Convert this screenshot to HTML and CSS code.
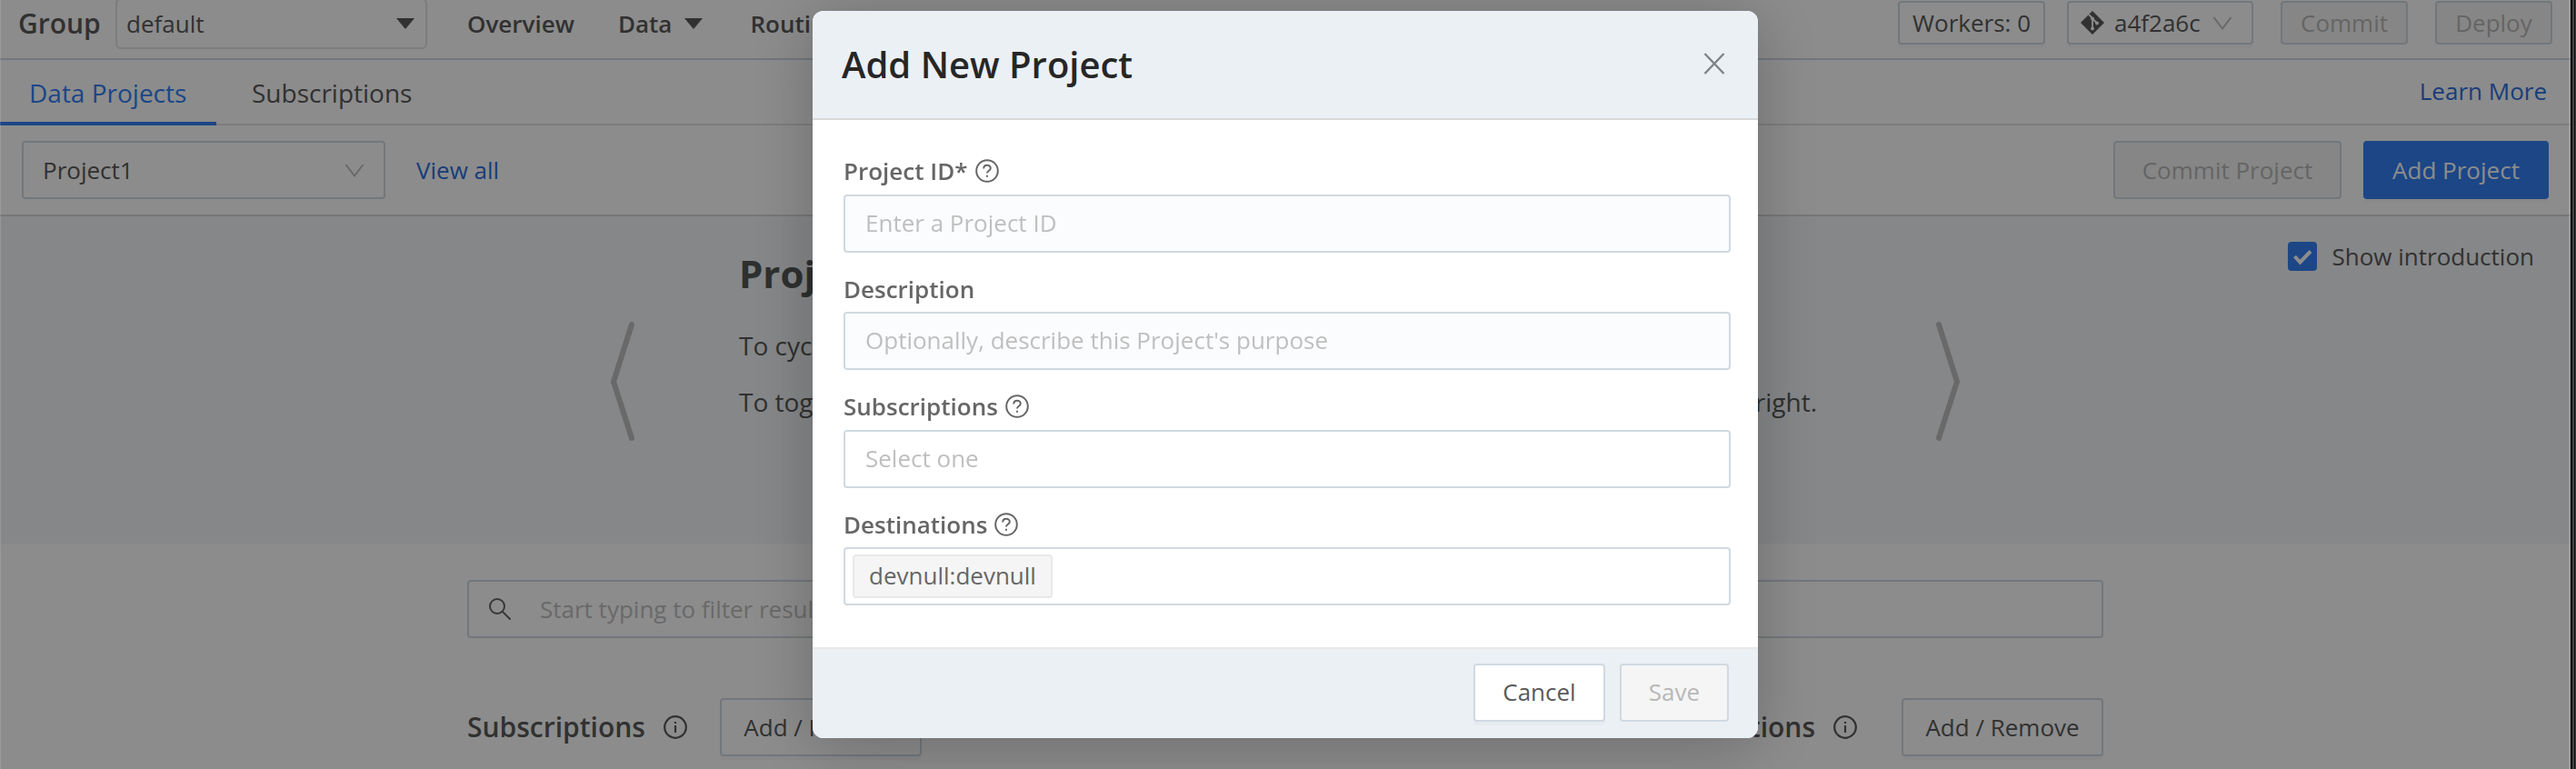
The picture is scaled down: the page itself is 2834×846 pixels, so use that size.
FILE: index.html
```html
<!DOCTYPE html>
<html lang="en">
<head>
    <meta charset="UTF-8">
    <meta name="viewport" content="width=device-width, initial-scale=1.0">
    <title>Data Projects</title>
    <link rel="stylesheet" href="styles.css">
</head>
<body>
    <div class="page">
        <header class="topbar">
            <span class="group-label">Group</span>
            <div class="group-select">
                <span>default</span>
                <svg class="caret" viewBox="0 0 20 12"><path d="M0 0h20L10 12z"/></svg>
            </div>
            <nav class="nav">
                <a>Overview</a>
                <a>Data <svg class="caret" viewBox="0 0 20 12"><path d="M0 0h20L10 12z"/></svg></a>
                <a>Routing</a>
            </nav>
            <div class="topbar-actions">
                <button class="btn small workers">Workers: 0</button>
                <button class="btn small commit-hash">
                    <svg class="git" viewBox="0 0 26 26">
                        <path d="M13 0 26 13 13 26 0 13z"/>
                        <path class="branch" d="M9.500 4.500 13 8v12M13 8.500l5 5"/>
                        <circle cx="13" cy="8.500" r="1.900"/><circle cx="13" cy="19.500" r="1.900"/><circle cx="18" cy="13.500" r="1.900"/>
                    </svg>
                    <span>a4f2a6c</span>
                    <svg class="chevron" viewBox="0 0 22 15"><path d="M1.500 1 11 13.500 20.500 1"/></svg>
                </button>
                <button class="btn small commit" disabled>Commit</button>
                <button class="btn small deploy" disabled>Deploy</button>
            </div>
        </header>

        <div class="tabs">
            <a class="tab active">Data Projects</a>
            <a class="tab">Subscriptions</a>
            <a class="learn">Learn More</a>
        </div>

        <div class="toolbar">
            <div class="project-select">
                <span>Project1</span>
                <svg class="chevron" viewBox="0 0 22 15"><path d="M1.500 1 11 13.500 20.500 1"/></svg>
            </div>
            <a class="link">View all</a>
            <button class="btn commit-project" disabled>Commit Project</button>
            <button class="btn primary add-project">Add Project</button>
        </div>

        <section class="intro">
            <svg class="arrow" viewBox="0 0 26 131"><path d="M23 3 3 66 23 128"/></svg>
            <div class="intro-text">
                <h2>Projects</h2>
                <p>To cycle through the introduction, use the arrows.</p>
                <p class="toggle-line"><span>To toggle this introduction, use the checkbox at the top</span> <span>right.</span></p>
            </div>
            <svg class="arrow" viewBox="0 0 26 131"><path d="M3 3 23 66 3 128"/></svg>
            <label class="show-intro">
                <span class="checkbox"><svg viewBox="0 0 32 32"><path d="m7.500 16 6 6.500L25 10.500"/></svg></span>
                Show introduction
            </label>
        </section>

        <section class="content">
            <div class="search">
                <svg viewBox="0 0 24 24"><circle cx="9" cy="9" r="8"/><path d="m14.500 14.500 8.500 8.500"/></svg>
                <span>Start typing to filter results</span>
            </div>
            <div class="columns">
                <div class="column subscriptions">
                    <h3>Subscriptions</h3>
                    <svg class="info" viewBox="0 0 26 26"><circle cx="13" cy="13" r="11.800"/><path d="M13 11v8M13 7v2"/></svg>
                    <button class="btn add-remove">Add / Remove</button>
                </div>
                <div class="column destinations">
                    <h3>Destinations</h3>
                    <svg class="info" viewBox="0 0 26 26"><circle cx="13" cy="13" r="11.800"/><path d="M13 11v8M13 7v2"/></svg>
                    <button class="btn add-remove">Add / Remove</button>
                </div>
            </div>
        </section>
    </div>

    <div class="overlay">
        <div class="modal">
            <div class="modal-header">
                <h1>Add New Project</h1>
                <svg class="close" viewBox="0 0 24 24"><path d="m1.500 1 21 22M22.500 1l-21 22"/></svg>
            </div>
            <form class="modal-body">
                <div class="field">
                    <label>Project ID* <svg class="help" viewBox="0 0 26 26"><circle cx="13" cy="13" r="11.800"/><path d="M9.200 10.500c0-5 7.600-5 7.600-.5 0 3-3.800 2.500-3.800 5.500M13 17.800v2"/></svg></label>
                    <input placeholder="Enter a Project ID">
                </div>
                <div class="field">
                    <label>Description</label>
                    <input placeholder="Optionally, describe this Project's purpose">
                </div>
                <div class="field">
                    <label>Subscriptions <svg class="help" viewBox="0 0 26 26"><circle cx="13" cy="13" r="11.800"/><path d="M9.200 10.500c0-5 7.600-5 7.600-.5 0 3-3.800 2.500-3.800 5.500M13 17.800v2"/></svg></label>
                    <div class="multi"><span class="placeholder">Select one</span></div>
                </div>
                <div class="field">
                    <label>Destinations <svg class="help" viewBox="0 0 26 26"><circle cx="13" cy="13" r="11.800"/><path d="M9.200 10.500c0-5 7.600-5 7.600-.5 0 3-3.800 2.500-3.800 5.500M13 17.800v2"/></svg></label>
                    <div class="multi"><span class="tag">devnull:devnull</span></div>
                </div>
            </form>
            <div class="modal-footer">
                <button class="btn cancel">Cancel</button>
                <button class="btn save" disabled>Save</button>
            </div>
        </div>
    </div>
</body>
</html>
```
FILE: styles.css
```css
:root {
    --text: #595959;
    --border: #d0d9e1;
    --line: #d9d9d9;
    --blue: #3380f4;
    --link: #2f6fe0;
    --panel: #ebf0f5;
    --muted: #bfbfbf;
}

* {
    box-sizing: border-box;
}

body {
    margin: 0;
    height: 846px;
    overflow: hidden;
    /* thin window frame past the right edge of the page */
    background: linear-gradient(90deg, #000 2830px, #454647 2830px 2832px, #0c0c0c 2832px 2833px, #3a3b3c 2833px);
    color: var(--text);
    font: 26px/36px "Open Sans", sans-serif;
    white-space: nowrap;
}

h1, h2, h3, p {
    margin: 0;
}

svg {
    display: block;
    flex: none;
    fill: none;
    stroke: currentColor;
    stroke-linecap: round;
}

.page {
    width: 2828px;
    height: 846px;
    overflow: hidden;
    background: #fff;
}

.btn {
    height: 64px;
    padding: 0;
    border: 2px solid var(--border);
    border-radius: 4px;
    background: #fff;
    color: var(--text);
    font: inherit;
    box-shadow: 0 4px 0 rgba(0, 0, 0, 0.02);
}

.btn:disabled {
    background: #f5f5f5;
    color: #b8b8b8;
    box-shadow: none;
}

.btn.primary {
    background: var(--blue);
    border-color: var(--blue);
    color: #fff;
}

.btn.small {
    height: 48px;
    line-height: 40px;
}

.topbar {
    display: flex;
    align-items: flex-start;
    height: 66px;
    border-bottom: 2px solid var(--border);
}

.group-label {
    width: 107px;
    margin-left: 20px;
    padding-top: 8px;
    font-size: 30px;
    font-weight: 600;
}

.group-select {
    display: flex;
    align-items: center;
    justify-content: space-between;
    width: 343px;
    height: 56px;
    margin-top: -2px;
    padding: 0 12px 1px 10px;
    border: 2px solid #e4e4e4;
    border-radius: 6px;
}

.caret {
    width: 20px;
    height: 12px;
    fill: currentColor;
    stroke: none;
}

.nav {
    display: flex;
    gap: 48px;
    margin-left: 44px;
    padding-top: 8px;
    font-weight: 600;
}

.nav a {
    display: flex;
    align-items: center;
    gap: 14px;
}

.nav a:last-child {
    margin-left: 4px;
}

.topbar-actions {
    display: flex;
    margin: 1px 20px 0 auto;
}

.workers {
    width: 162px;
    margin-right: 24px;
}

.commit-hash {
    display: flex;
    align-items: center;
    width: 205px;
    margin-right: 30px;
    padding-left: 13px;
}

.commit-hash span {
    width: 108px;
    margin-left: 11px;
    text-align: left;
}

.git {
    width: 26px;
    height: 26px;
    fill: currentColor;
    stroke: none;
}

.git .branch {
    fill: none;
    stroke: #fff;
    stroke-width: 1.8;
}

.git circle {
    fill: #fff;
}

.chevron {
    width: 22px;
    height: 15px;
    color: var(--muted);
    stroke-width: 2;
    stroke-linecap: butt;
}

.commit {
    width: 140px;
    margin-right: 30px;
}

.deploy {
    width: 129px;
}

.tabs {
    display: flex;
    height: 72px;
    border-bottom: 2px solid #e4e4e4;
    font-size: 28px;
}

.tab {
    height: 72px;
    padding: 18px 36px 0;
}

.tab.active {
    width: 238px;
    padding: 18px 0 0 32px;
    border-bottom: 4px solid var(--blue);
    color: var(--blue);
    margin-right: 3px;
}

.learn {
    margin-left: auto;
    padding: 16px 26px 0 0;
    font-size: 26px;
    color: var(--link);
}

.toolbar {
    display: flex;
    align-items: center;
    height: 100px;
    padding: 0 24px;
    border-bottom: 2px solid var(--line);
}

.project-select {
    display: flex;
    align-items: center;
    justify-content: space-between;
    width: 400px;
    height: 64px;
    padding: 0 21px;
    border: 2px solid var(--border);
    border-radius: 4px;
}

.link {
    margin-left: 34px;
    color: var(--link);
}

.commit-project {
    width: 251px;
    margin-left: auto;
}

.add-project {
    width: 204px;
    margin-left: 24px;
}

.intro {
    position: relative;
    display: flex;
    height: 360px;
    padding-left: 672px;
    background: #f3f6f9;
    color: #545856;
}

.arrow {
    width: 26px;
    height: 131px;
    margin-top: 116px;
    color: var(--muted);
    stroke-width: 6;
    stroke-linejoin: round;
}

.intro-text {
    width: 1186px;
    margin: 35px 131px 0 115px;
    font-size: 28px;
}

.intro-text h2 {
    margin-bottom: 33px;
    font-size: 42px;
    line-height: 56px;
    font-weight: 700;
}

.intro-text p {
    margin-bottom: 26px;
}

.toggle-line {
    display: flex;
    justify-content: space-between;
}

/* sits over the carousel, top right */
.show-intro {
    position: absolute;
    top: 26px;
    right: 40px;
    display: flex;
    gap: 16px;
    color: var(--text);
}

.checkbox {
    width: 32px;
    height: 32px;
    margin-top: 2px;
    border-radius: 4px;
    background: var(--blue);
    color: #fff;
}

.checkbox svg {
    stroke-width: 4;
    stroke-linecap: butt;
}

.content {
    width: 1800px;
    margin: 40px 0 0 514px;
}

.search {
    display: flex;
    align-items: center;
    height: 64px;
    padding-left: 22px;
    border: 2px solid var(--border);
    border-radius: 4px;
    color: var(--muted);
}

.search svg {
    width: 24px;
    margin-right: 32px;
    color: #666;
    stroke-width: 2;
}

.columns {
    display: flex;
    justify-content: space-between;
    margin-top: 66px;
}

.column {
    display: flex;
    align-items: center;
}

.column h3 {
    font-size: 30px;
    font-weight: 600;
}

.info {
    width: 26px;
    height: 26px;
    margin: 0 36px 0 20px;
    stroke-width: 2.2;
    stroke-linecap: butt;
}

.destinations .info {
    margin-right: 49px;
}

.add-remove {
    width: 222px;
    padding-bottom: 1px;
}

.overlay {
    position: fixed;
    inset: 0 6px 0 0;
    padding: 12px 0 0 893px;
    border-left: 1px solid rgba(255, 255, 255, 0.12);
    border-right: 2px solid rgba(255, 255, 255, 0.16);
    background: rgba(0, 0, 0, 0.45);
}

.modal {
    width: 1040px;
    height: 800px;
    display: flex;
    flex-direction: column;
    overflow: hidden;
    border-radius: 12px;
    background: #fff;
    box-shadow: 0 8px 72px rgba(0, 0, 0, 0.24);
}

.modal-header {
    display: flex;
    align-items: center;
    justify-content: space-between;
    height: 120px;
    padding: 0 36px 2px 32px;
    border-bottom: 2px solid var(--line);
    background: var(--panel);
}

.modal-header h1 {
    padding-top: 2px;
    color: #262626;
    font-size: 40px;
    font-weight: 600;
}

.close {
    width: 24px;
    height: 24px;
    color: #808385;
    stroke-width: 2.4;
    stroke-linecap: butt;
}

.modal-body {
    flex: 1;
    padding: 39px 30px 0 34px;
}

.field {
    height: 129.6px;
}

.field label {
    display: flex;
    align-items: center;
    gap: 8px;
    height: 42.6px;
    padding-bottom: 8px;
    font-weight: 600;
    color: #666;
}

.help {
    width: 26px;
    height: 26px;
    stroke-width: 2;
    stroke-linecap: butt;
}

.field input,
.multi {
    display: flex;
    align-items: center;
    width: 100%;
    height: 64px;
    border: 2px solid var(--border);
    border-radius: 4px;
}

.field input {
    padding: 0 22px 2px;
    background: #fbfcfe;
    font: inherit;
}

.field input::placeholder,
.placeholder {
    color: var(--muted);
}

.placeholder {
    margin-left: 22px;
    padding-bottom: 2px;
}

.tag {
    width: 220px;
    height: 48px;
    margin-left: 8px;
    border: 2px solid #e8e8e8;
    border-radius: 4px;
    background: #f5f5f5;
    color: #666;
    line-height: 43px;
    text-align: center;
}

.modal-footer {
    display: flex;
    justify-content: flex-end;
    gap: 16px;
    height: 100px;
    padding: 16px 32px 0;
    border-top: 2px solid #e8e8e8;
    background: var(--panel);
}

.modal-footer .btn {
    padding-bottom: 2px;
}

.cancel {
    width: 145px;
}

.save {
    width: 120px;
}
```
